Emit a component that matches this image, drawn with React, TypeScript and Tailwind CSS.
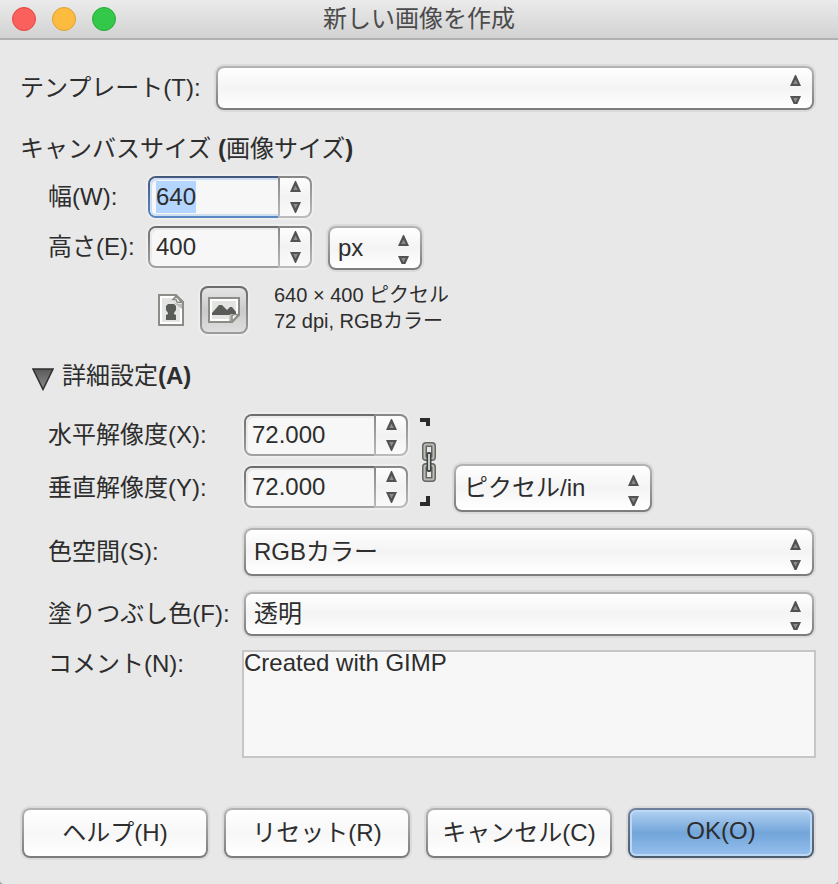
import { useEffect, useRef, type ReactNode, type RefObject } from "react";

const popup =
  "w-full appearance-none rounded-lg border-2 border-transparent pl-2 pr-8 text-2xl outline-none shadow-[0_0_0_2px_#dadada] [background:linear-gradient(#fff,#f4f4f4_50%,#fff)_padding-box,linear-gradient(#b4b4b4,#7c7c7c)_border-box]";

const pushButton =
  "h-[50px] min-w-0 flex-1 rounded-lg border-2 border-transparent text-2xl shadow-[0_0_0_2px_#dadada]";

function Triangle({ down = false }: { down?: boolean }) {
  return (
    <svg
      width="11"
      height="11"
      viewBox="0 0 11 11"
      className={`shrink-0 ${down ? "rotate-180" : ""}`}
      aria-hidden="true"
    >
      <path d="M5 0H6L11 11H0Z" fill="#525252" />
      <path d="M5.5 4.5 7.8 9H3.2Z" fill="#8c8c8c" />
    </svg>
  );
}

function Popup({
  id,
  label,
  value,
  tall = false,
  className,
}: {
  id: string;
  label?: string;
  value: string;
  tall?: boolean;
  className: string;
}) {
  return (
    <div className={`relative ${className}`}>
      <select id={id} aria-label={label} defaultValue={value} className={`${popup} ${tall ? "h-12" : "h-11"}`}>
        <option value={value}>{value}</option>
      </select>
      <span
        className={`pointer-events-none absolute right-[13px] flex flex-col gap-[10px] overflow-hidden ${
          tall ? "top-[11px] h-[31px]" : "top-[9px] h-[29px]"
        }`}
      >
        <Triangle />
        <Triangle down />
      </span>
    </div>
  );
}

function Spinner({
  id,
  value,
  active = false,
  inputRef,
}: {
  id: string;
  value: string;
  active?: boolean;
  inputRef?: RefObject<HTMLInputElement | null>;
}) {
  return (
    <div className="flex h-[42px] w-[164px] shrink-0 rounded-lg shadow-[0_0_0_2px_#eeeeee]">
      <input
        id={id}
        ref={inputRef}
        type="text"
        defaultValue={value}
        className={`w-[130px] rounded-l-lg border-y-2 border-l-2 border-transparent pl-1.5 text-2xl outline-none selection:bg-[#b4d5fe] selection:text-[#2d2d2d] ${
          active
            ? "shadow-[inset_2px_2px_0_#cfdff3,inset_0_-2px_0_#cfdff3] [background:linear-gradient(#f7f7f7,#f7f7f7)_padding-box,linear-gradient(#43577a,#5b8ac6)_border-box]"
            : "shadow-[inset_2px_2px_0_#ebebeb] [background:linear-gradient(#f7f7f7,#f7f7f7)_padding-box,linear-gradient(#6c6c6c,#a2a2a2)_border-box]"
        }`}
      />
      <div className="flex flex-1 flex-col gap-1 rounded-r-lg border-2 border-transparent [background:linear-gradient(#fdfdfd,#f2f2f2_50%,#fafafa)_padding-box,linear-gradient(#868686,#bcbcbc)_border-box]">
        <button type="button" aria-label="増やす" className="flex flex-1 items-center justify-center">
          <Triangle />
        </button>
        <button type="button" aria-label="減らす" className="flex flex-1 items-center justify-center">
          <Triangle down />
        </button>
      </div>
    </div>
  );
}

function Label({ htmlFor, className, children }: { htmlFor: string; className: string; children: ReactNode }) {
  return (
    <label htmlFor={htmlFor} className={`flex shrink-0 items-center whitespace-nowrap ${className}`}>
      {children}
    </label>
  );
}

function PortraitIcon() {
  return (
    <svg width="26" height="32" viewBox="0 0 26 32" aria-hidden="true">
      <path d="M1 1H18L25 8V31H1Z" fill="#fff" stroke="#8b8d87" strokeWidth="2" />
      <path d="M4 4H15L22 11V28H4Z" fill="#e4e4e3" />
      <path d="M16 9 24 10V15Z" fill="#bdbdbb" />
      <path d="M15 5.5H18L19 8 24 8.5 18 2Z" fill="#f6f6f6" stroke="#8b8d87" strokeWidth="1.5" />
      <path d="M10 10H16L18 12V16L16 19V20L18 21V26H8V21L10 20V19L8 16V12Z" fill="#5a5c57" />
    </svg>
  );
}

function LandscapeIcon() {
  return (
    <svg width="32" height="26" viewBox="0 0 32 26" aria-hidden="true">
      <path d="M1 1H31V18L24 25H1Z" fill="#fff" stroke="#8b8d87" strokeWidth="2" />
      <path d="M4 4H28V16L21 22H4Z" fill="#e4e4e3" />
      <path d="M4 18V16L11 8H14L19 13 22 10H24L28 15V18Z" fill="#5a5c57" />
      <path d="M22 17H26L24 24H21Z" fill="#b4b4b1" />
      <path d="M24 24.5V19L26 17.5H30.5Z" fill="#f8f8f8" stroke="#8b8d87" strokeWidth="1.5" />
    </svg>
  );
}

function ChainLink() {
  return (
    <svg width="16" height="88" viewBox="0 0 16 88" aria-hidden="true">
      <path d="M0 0H10V8H6V4H0ZM6 78H10V88H0V84H6Z" fill="#2b2b2b" />
      <g fill="none">
        <rect x="4.5" y="26.5" width="9" height="14" rx="1.5" stroke="#646661" strokeWidth="5" />
        <rect x="4.5" y="47.5" width="9" height="14" rx="1.5" stroke="#646661" strokeWidth="5" />
        <rect x="4.5" y="26.5" width="9" height="14" rx="1.5" stroke="#b9bbb6" strokeWidth="2" />
        <rect x="4.5" y="47.5" width="9" height="14" rx="1.5" stroke="#b9bbb6" strokeWidth="2" />
      </g>
      <rect x="6.5" y="34" width="5" height="20" rx="2" fill="#3f4443" />
      <rect x="8" y="36" width="2" height="16" fill="#c9cbc7" />
    </svg>
  );
}

export default function App() {
  const widthRef = useRef<HTMLInputElement>(null);

  useEffect(() => {
    widthRef.current?.focus();
    widthRef.current?.select();
  }, []);

  return (
    <div className="bg-[#8fa3ad]">
      <div className="flex min-h-screen flex-col rounded-b-[4px] bg-[#e8e8e8] font-['Liberation_Sans','Noto_Sans_CJK_JP',sans-serif] text-2xl text-[#2d2d2d]">
        <header className="grid h-10 grid-cols-[1fr_auto_1fr] items-center border-b-2 border-[#b1b1b1] bg-linear-to-b from-[#ebebeb] to-[#d2d2d2] px-3">
          <div className="flex gap-4">
            <button type="button" aria-label="閉じる" className="size-6 rounded-full border border-[#e2463f] bg-[#fc605c]" />
            <button type="button" aria-label="最小化" className="size-6 rounded-full border border-[#dfa033] bg-[#fdbc40]" />
            <button type="button" aria-label="拡大" className="size-6 rounded-full border border-[#27ab36] bg-[#34c84a]" />
          </div>
          <h1 className="leading-8 text-[#4b4b4b]">新しい画像を作成</h1>
        </header>

        <form className="flex flex-1 flex-col" onSubmit={(e) => e.preventDefault()}>
          <div className="flex flex-col pt-[26px] pr-6 pl-5">
            <div className="flex">
              <Label htmlFor="template" className="w-[196px]">
                テンプレート(T):
              </Label>
              <Popup id="template" value="" className="flex-1" />
            </div>

            <h2 className="mt-6 leading-[30px]">
              キャンバスサイズ <span className="font-bold">(</span>画像サイズ<span className="font-bold">)</span>
            </h2>

            <div className="mt-3 flex flex-col gap-2 pl-7">
              <div className="flex">
                <Label htmlFor="width" className="w-[100px]">
                  幅(W):
                </Label>
                <Spinner id="width" value="640" active inputRef={widthRef} />
              </div>
              <div className="flex items-start">
                <Label htmlFor="height" className="h-[42px] w-[100px]">
                  高さ(E):
                </Label>
                <Spinner id="height" value="400" />
                <Popup id="unit" label="単位" value="px" className="ml-4 w-[94px]" />
              </div>
            </div>

            <div className="mt-3 flex items-end pl-32">
              <button type="button" aria-label="縦長" className="flex h-12 w-[46px] items-center justify-center">
                <PortraitIcon />
              </button>
              <button
                type="button"
                aria-label="横長"
                aria-pressed="true"
                className="ml-1.5 flex size-12 items-center justify-center rounded-lg border-2 border-transparent shadow-[0_0_0_2px_#eeeeee] [background:linear-gradient(#e4e4e4,#cbcbcb_50%,#dedede)_padding-box,linear-gradient(#6a6a6a,#9c9c9c)_border-box]"
              >
                <LandscapeIcon />
              </button>
              <p className="ml-[26px] text-xl leading-[26px]">
                640 × 400 ピクセル
                <br />
                72 dpi, RGBカラー
              </p>
            </div>

            <button type="button" aria-expanded="true" className="mt-[27px] flex items-center gap-2 self-start pl-3 leading-[30px]">
              <svg width="22" height="30" viewBox="0 0 22 30" aria-hidden="true">
                <defs>
                  <linearGradient id="expander" x1="0" y1="0" x2="0" y2="1">
                    <stop offset="0" stopColor="#5a5a5a" />
                    <stop offset="1" stopColor="#8a8a8a" />
                  </linearGradient>
                </defs>
                <path d="M1 8H21L11 28.5Z" fill="url(#expander)" stroke="#2f2f2f" strokeWidth="1.5" />
              </svg>
              <span>
                詳細設定<span className="font-bold">(A)</span>
              </span>
            </button>

            <div className="mt-[23px] flex items-end pl-7">
              <div className="flex w-[196px] flex-col gap-2">
                <Label htmlFor="xres" className="h-[42px]">
                  水平解像度(X):
                </Label>
                <Label htmlFor="yres" className="h-12">
                  垂直解像度(Y):
                </Label>
              </div>
              <div className="mb-1 flex flex-col gap-[10px]">
                <Spinner id="xres" value="72.000" />
                <Spinner id="yres" value="72.000" />
              </div>
              <button type="button" aria-label="解像度を連動" className="mb-1.5 ml-3">
                <ChainLink />
              </button>
              <Popup id="resunit" label="解像度の単位" value="ピクセル/in" tall className="ml-[18px] w-[198px]" />
            </div>

            <div className="mt-4 flex pl-7">
              <Label htmlFor="colorspace" className="w-[196px]">
                色空間(S):
              </Label>
              <Popup id="colorspace" value="RGBカラー" tall className="flex-1" />
            </div>
            <div className="mt-4 flex pl-7">
              <Label htmlFor="fill" className="w-[196px]">
                塗りつぶし色(F):
              </Label>
              <Popup id="fill" value="透明" className="flex-1" />
            </div>
            <div className="mt-4 flex items-start pl-7">
              <Label htmlFor="comment" className="h-6 w-[196px]">
                コメント(N):
              </Label>
              <textarea
                id="comment"
                defaultValue="Created with GIMP"
                className="h-[104px] min-w-0 flex-1 resize-none bg-[#f7f7f7] leading-[22px] ring-2 ring-[#c6c6c6] outline-none"
              />
            </div>
          </div>

          <footer className="mt-13 flex gap-4 pr-6 pb-[26px] pl-[22px]">
            {["ヘルプ(H)", "リセット(R)", "キャンセル(C)"].map((text) => (
              <button
                key={text}
                type="button"
                className={`${pushButton} [background:linear-gradient(#fff,#f7f7f7_50%,#fff)_padding-box,linear-gradient(#b4b4b4,#7c7c7c)_border-box]`}
              >
                {text}
              </button>
            ))}
            <button
              type="submit"
              className={`${pushButton} pb-1 inset-shadow-[0_0_0_2px_#bcd8f5] [background:linear-gradient(#b3d2f2,#72a5da_50%,#97c1ee)_padding-box,linear-gradient(#70819b,#4b5a6b)_border-box]`}
            >
              OK(O)
            </button>
          </footer>
        </form>
      </div>
    </div>
  );
}
